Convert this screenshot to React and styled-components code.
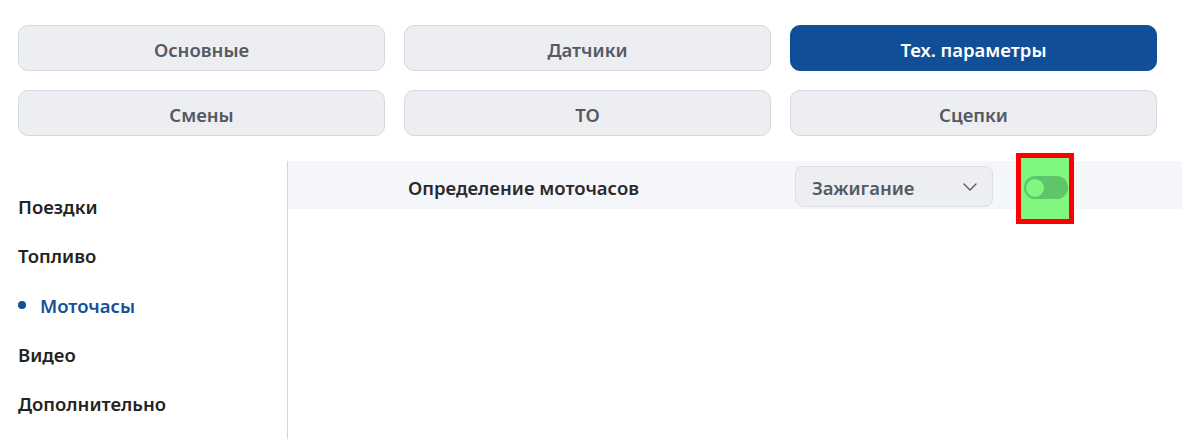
import React from "react";
import styled, { createGlobalStyle } from "styled-components";
import { ChevronDown } from "lucide-react";

const Global = createGlobalStyle`
  html, body { margin: 0; padding: 0; background: #fff; }
  body { font-family: "Noto Sans", "Open Sans", sans-serif; }
  * { box-sizing: border-box; }
`;

const Page = styled.div`
  width: 1182px;
  height: 439px;
  overflow: hidden;
  padding-top: 25px;
`;

const TabGrid = styled.div`
  display: grid;
  grid-template-columns: repeat(3, 1fr);
  gap: 19px;
  padding: 0 25px 0 18px;
`;

const Tab = styled.button`
  height: 46px;
  border-radius: 10px;
  border: 1px solid ${(p) => (p.$active ? "#104f98" : "#d4d8e0")};
  background: ${(p) => (p.$active ? "#104f98" : "#eceef2")};
  color: ${(p) => (p.$active ? "#ffffff" : "#555961")};
  font-family: inherit;
  font-size: 18.5px;
  font-weight: 600;
  display: flex;
  align-items: center;
  justify-content: center;
  padding: 2px 0 0;
  cursor: pointer;
`;

const Lower = styled.div`
  display: flex;
  margin-top: 25px;
  height: 278px;
`;

const Sidebar = styled.nav`
  width: 288px;
  flex: none;
  border-right: 1px solid #d2d6de;
  padding: 21px 0 0 18px;
  display: flex;
  flex-direction: column;
`;

const NavItem = styled.div`
  height: 49.3px;
  display: flex;
  align-items: center;
  gap: 14px;
  font-size: 18.5px;
  font-weight: 600;
  color: ${(p) => (p.$active ? "#14509a" : "#232323")};
`;

const Dot = styled.span`
  width: 8px;
  height: 8px;
  border-radius: 50%;
  background: #14509a;
`;

const Content = styled.div`
  flex: 1;
`;

const Row = styled.div`
  height: 48px;
  background: #f5f6fa;
  display: flex;
  align-items: center;
  padding: 5px 0 0 120px;
`;

const Label = styled.div`
  width: 387px;
  font-size: 18.5px;
  font-weight: 600;
  color: #2a2a2a;
`;

const Select = styled.div`
  width: 198px;
  height: 41px;
  border-radius: 8px;
  border: 1px solid #dcdfe6;
  background: #eceef2;
  display: flex;
  align-items: center;
  justify-content: space-between;
  padding: 1px 10px 0 16px;
  font-size: 18.5px;
  font-weight: 600;
  color: #555961;
  margin-top: -2px;
`;

const ToggleWrap = styled.div`
  position: relative;
  margin-left: 31px;
  width: 44px;
  height: 23px;
`;

const Highlight = styled.div`
  position: absolute;
  left: -8px;
  top: -23px;
  width: 58px;
  height: 71px;
  border: 5px solid #ff0000;
  background: #80f880;
`;

const Track = styled.div`
  position: relative;
  width: 44px;
  height: 23px;
  border-radius: 12px;
  background: #60c468;
  display: flex;
  align-items: center;
  padding-left: 2px;
`;

const Knob = styled.span`
  width: 18px;
  height: 18px;
  border-radius: 50%;
  background: #80f880;
`;

const tabs = [
  "Основные",
  "Датчики",
  "Тех. параметры",
  "Смены",
  "ТО",
  "Сцепки",
];

const nav = ["Поездки", "Топливо", "Моточасы", "Видео", "Дополнительно"];

export default function App() {
  return (
    <Page>
      <Global />
      <TabGrid>
        {tabs.map((t) => (
          <Tab key={t} $active={t === "Тех. параметры"}>
            {t}
          </Tab>
        ))}
      </TabGrid>
      <Lower>
        <Sidebar>
          {nav.map((n) => (
            <NavItem key={n} $active={n === "Моточасы"}>
              {n === "Моточасы" && <Dot />}
              {n}
            </NavItem>
          ))}
        </Sidebar>
        <Content>
          <Row>
            <Label>Определение моточасов</Label>
            <Select>
              <span>Зажигание</span>
              <ChevronDown size={24} strokeWidth={1.3} color="#555" />
            </Select>
            <ToggleWrap>
              <Highlight />
              <Track>
                <Knob />
              </Track>
            </ToggleWrap>
          </Row>
        </Content>
      </Lower>
    </Page>
  );
}
